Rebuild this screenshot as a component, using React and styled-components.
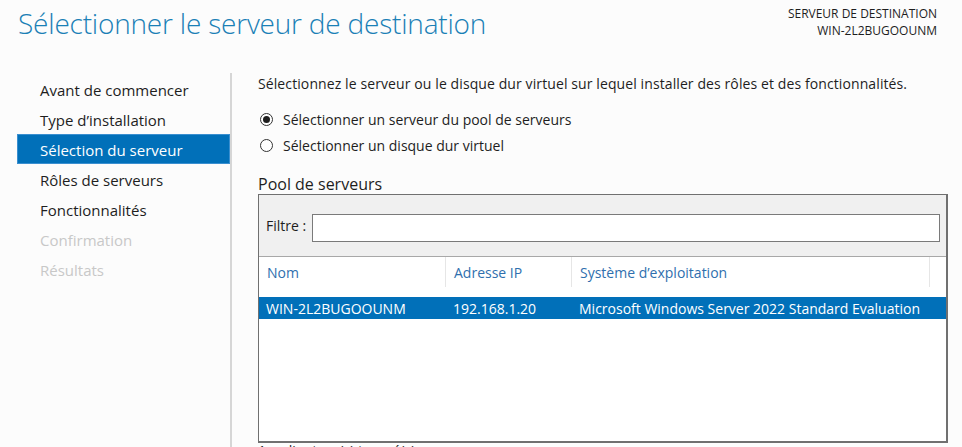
import React from 'react';
import styled, { createGlobalStyle } from 'styled-components';

const GlobalStyle = createGlobalStyle`
  html, body {
    margin: 0;
    padding: 0;
    background: #fcfcfc;
    overflow: hidden;
  }
  body {
    font-family: "Segoe UI", "Open Sans", "Noto Sans", sans-serif;
    color: #1e1e1e;
  }
`;

const Page = styled.div`
  width: 962px;
  height: 447px;
  display: flex;
  flex-direction: column;
  overflow: hidden;
`;

const Header = styled.div`
  display: flex;
  justify-content: space-between;
  align-items: flex-start;
  height: 73px;
  flex-shrink: 0;
`;

const Title = styled.h1`
  margin: 0;
  padding: 4px 0 0 18px;
  font-size: 28px;
  font-weight: 300;
  color: #1a80b6;
  letter-spacing: -0.2px;
`;

const Target = styled.div`
  padding: 5px 25px 0 0;
  text-align: right;
  font-size: 12px;
  line-height: 17px;
  color: #1e1e1e;
`;

const Body = styled.div`
  flex: 1;
  display: flex;
  min-height: 0;
`;

const Nav = styled.ul`
  list-style: none;
  margin: 0 2px 0 0;
  padding: 1px 0 0 17px;
  width: 213px;
  border-right: 2px solid #d6d6d6;
`;

const NavItem = styled.li`
  height: 30px;
  display: flex;
  align-items: center;
  padding: 1px 0 0 23px;
  box-sizing: border-box;
  font-size: 15px;
  color: ${p => (p.$active ? '#fff' : p.$disabled ? '#c8c8c8' : '#1e1e1e')};
  background: ${p => (p.$active ? '#0170b9' : 'transparent')};
  box-shadow: ${p => (p.$active ? 'inset 0 0 0 1px #3a8fd0' : 'none')};
`;

const Content = styled.div`
  flex: 1;
  padding: 0 14px 0 24px;
  display: flex;
  flex-direction: column;
`;

const Intro = styled.p`
  margin: 0;
  padding-top: 1px;
  font-size: 14px;
  line-height: 20px;
  letter-spacing: 0.1px;
`;

const Options = styled.div`
  margin-top: 15px;
  display: flex;
  flex-direction: column;
  gap: 6px;
`;

const Option = styled.label`
  display: flex;
  align-items: center;
  gap: 10px;
  font-size: 14px;
  height: 20px;
  padding-left: 2px;
`;

const Radio = styled.span`
  width: 11px;
  height: 11px;
  border: 1px solid #333;
  border-radius: 50%;
  display: flex;
  align-items: center;
  justify-content: center;
  background: #fff;

  &::after {
    content: '';
    width: 7px;
    height: 7px;
    border-radius: 50%;
    background: ${p => (p.$checked ? '#1e1e1e' : 'transparent')};
  }
`;

const SectionTitle = styled.div`
  margin-top: 19px;
  font-size: 16px;
  line-height: 20px;
`;

const Pool = styled.div`
  flex-shrink: 0;
  height: 246px;
  border: 1px solid #707070;
  border-right-width: 2px;
  border-bottom-width: 2px;
  background: #fff;
  display: flex;
  flex-direction: column;
`;

const FilterBar = styled.div`
  height: 61px;
  background: #f0f0f0;
  border-bottom: 1px solid #a8a8a8;
  display: flex;
  align-items: center;
  gap: 6px;
  padding: 0 6px 0 7px;
  font-size: 14px;
`;

const FilterInput = styled.div`
  flex: 1;
  height: 26px;
  margin-top: 4px;
  border: 1px solid #7a7a7a;
  background: #fff;
`;

const Grid = styled.div`
  display: grid;
  grid-template-columns: 187px 126px 358px 1fr;
`;

const HeadCell = styled.div`
  height: 29px;
  display: flex;
  align-items: center;
  padding: 1px 0 0 8px;
  font-size: 14px;
  color: #2f6fae;
  border-right: ${p => (p.$last ? 'none' : '1px solid #e6e6e6')};
`;

const Row = styled.div`
  grid-column: 1 / -1;
  margin-top: 10px;
  display: grid;
  grid-template-columns: 187px 126px 1fr;
  height: 22px;
  background: #0170b9;
  color: #fff;
  font-size: 14px;
`;

const Cell = styled.div`
  display: flex;
  align-items: center;
  padding-left: 7px;
  white-space: nowrap;
`;

const Footer = styled.div`
  flex-shrink: 0;
  margin-top: 1px;
  font-size: 14px;
  line-height: 14px;
`;

const steps = [
  { label: 'Avant de commencer' },
  { label: 'Type d’installation' },
  { label: 'Sélection du serveur', active: true },
  { label: 'Rôles de serveurs' },
  { label: 'Fonctionnalités' },
  { label: 'Confirmation', disabled: true },
  { label: 'Résultats', disabled: true },
];

export default function App() {
  return (
    <>
      <GlobalStyle />
      <Page>
        <Header>
          <Title>Sélectionner le serveur de destination</Title>
          <Target>
            SERVEUR DE DESTINATION
            <br />
            WIN-2L2BUGOOUNM
          </Target>
        </Header>
        <Body>
          <Nav>
            {steps.map(s => (
              <NavItem key={s.label} $active={s.active} $disabled={s.disabled}>
                {s.label}
              </NavItem>
            ))}
          </Nav>
          <Content>
            <Intro>
              Sélectionnez le serveur ou le disque dur virtuel sur lequel installer des rôles et des fonctionnalités.
            </Intro>
            <Options>
              <Option>
                <Radio $checked />
                Sélectionner un serveur du pool de serveurs
              </Option>
              <Option>
                <Radio />
                Sélectionner un disque dur virtuel
              </Option>
            </Options>
            <SectionTitle>Pool de serveurs</SectionTitle>
            <Pool>
              <FilterBar>
                Filtre :
                <FilterInput />
              </FilterBar>
              <Grid>
                <HeadCell>Nom</HeadCell>
                <HeadCell>Adresse IP</HeadCell>
                <HeadCell>Système d’exploitation</HeadCell>
                <HeadCell $last />
                <Row>
                  <Cell>WIN-2L2BUGOOUNM</Cell>
                  <Cell>192.168.1.20</Cell>
                  <Cell>Microsoft Windows Server 2022 Standard Evaluation</Cell>
                </Row>
              </Grid>
            </Pool>
            <Footer>1 ordinateur(s) trouvé(s)</Footer>
          </Content>
        </Body>
      </Page>
    </>
  );
}
